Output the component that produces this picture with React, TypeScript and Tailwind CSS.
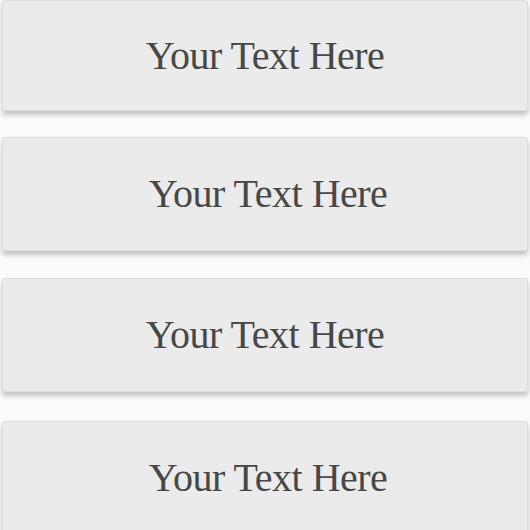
import React from 'react';

const cards = [
  { h: 'h-[111px]', mt: 'mt-0', shift: 'pl-0' },
  { h: 'h-[114px]', mt: 'mt-[26px]', shift: 'pl-[6px]' },
  { h: 'h-[114px]', mt: 'mt-[27px]', shift: 'pl-0' },
  { h: 'h-[114px]', mt: 'mt-[29px]', shift: 'pl-[6px]' },
];

const App: React.FC = () => {
  return (
    <div className="w-[530px] h-[530px] overflow-hidden bg-[#fbfbfb] flex flex-col px-[2px]">
      {cards.map((c, i) => (
        <div
          key={i}
          className={`${c.h} ${c.mt} shrink-0 bg-[#ebebeb] border border-[#dcdcdc] rounded-[3px] shadow-[0_4px_5px_rgba(0,0,0,0.22)] flex items-center justify-center ${c.shift}`}
        >
          <span className="text-[40px] leading-none text-[#474747] font-['Liberation_Serif',serif] tracking-[-0.5px]">
            Your Text Here
          </span>
        </div>
      ))}
    </div>
  );
};

export default App;
